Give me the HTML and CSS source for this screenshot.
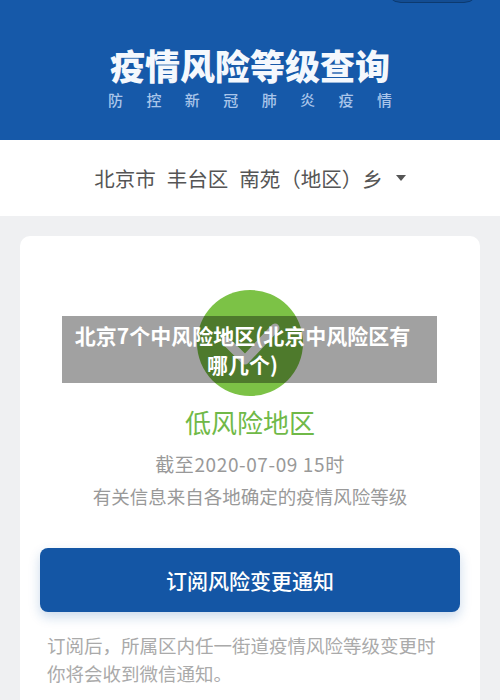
FILE: index.html
```html
<!DOCTYPE html>
<html lang="zh-CN">
<head>
    <meta charset="UTF-8">
    <meta name="viewport" content="width=device-width, initial-scale=1.0">
    <title>疫情风险等级查询</title>
  <link rel="stylesheet" href="styles.css">
</head>
<body>

    <div class="header">
        <div class="capsule"></div>
        <div class="title">疫情风险等级查询</div>
        <div class="subtitle">
            <span>防</span><span>控</span><span>新</span><span>冠</span>
            <span>肺</span><span>炎</span><span>疫</span><span>情</span>
        </div>
    </div>

    <div class="location">
        <span class="place">北京市</span>
        <span class="place">丰台区</span>
        <span class="place">南苑（地区）乡</span>
        <span class="arrow"></span>
    </div>

    <div class="page">
        <div class="card">
            <div class="badge">
                <svg width="106" height="106" viewBox="0 0 106 106">
                    <circle cx="53" cy="53" r="53" fill="#7cc246"/>
                    <polyline points="29,51 48,70 78,38" fill="none" stroke="#fff" stroke-width="9" stroke-linecap="round" stroke-linejoin="round"/>
                </svg>
            </div>
            <div class="level">低风险地区</div>
            <div class="info date">截至2020-07-09 15时</div>
            <div class="info">有关信息来自各地确定的疫情风险等级</div>

            <div class="subscribe">订阅风险变更通知</div>
            <div class="note">订阅后，所属区内任一街道疫情风险等级变更时<br>你将会收到微信通知。</div>
        </div>
    </div>

    <!-- watermark caption over the badge -->
    <div class="caption">北京7个中风险地区(北京中风险区有<br>哪几个)</div>

</body>
</html>
```

FILE: styles.css
```css
body {
    margin: 0;
    background: #eff0f2;
    font-family: "Noto Sans CJK SC", "Noto Sans", sans-serif;
    height: 700px;
    overflow: hidden;
    position: relative;
}
.header {
    background: #1659a9;
    height: 140px;
    box-sizing: border-box;
    padding-top: 45px;
    position: relative;
    overflow: hidden;
}
.capsule {
    position: absolute;
    top: -30px;
    right: 20px;
    width: 95px;
    height: 33px;
    border-radius: 16px;
    background: #134d93;
    border: 1px solid #0c3a70;
    box-sizing: border-box;
}
.title {
    color: #f4f8fd;
    font-size: 35px;
    font-weight: 900;
    line-height: 40px;
    text-align: center;
}
.subtitle {
    width: 284px;
    margin: 5px auto 0;
    display: flex;
    justify-content: space-between;
    color: #a9c5ea;
    font-size: 15px;
    font-weight: 500;
    line-height: 20px;
}
.location {
    background: #fff;
    height: 76px;
    display: flex;
    align-items: center;
    justify-content: center;
    gap: 11px;
    font-size: 20.5px;
    color: #555;
}
.arrow {
    width: 0;
    height: 0;
    margin-left: 2px;
    border-left: 5px solid transparent;
    border-right: 5px solid transparent;
    border-top: 6px solid #555;
}
.page {
    padding: 20px 20px 0;
}
.card {
    background: #fff;
    border-radius: 10px;
    padding: 54px 20px 40px;
    text-align: center;
}
.badge {
    height: 106px;
}
.level {
    margin-top: 8px;
    color: #70b948;
    font-size: 26px;
    line-height: 36px;
}
.info {
    color: #999;
    font-size: 18.5px;
    line-height: 30px;
    margin-top: 2px;
}
.info.date {
    margin-top: 9px;
    font-size: 19px;
    letter-spacing: 0.6px;
}
.subscribe {
    margin-top: 37px;
    height: 64px;
    line-height: 64px;
    border-radius: 8px;
    background: #1456a5;
    color: #fff;
    font-size: 21px;
    font-weight: 500;
    box-shadow: 0 5px 12px rgba(20, 86, 165, 0.22);
}
.note {
    margin-top: 19px;
    padding: 0 7px;
    text-align: left;
    color: #aaa;
    font-size: 18.5px;
    line-height: 28px;
}
.caption {
    position: absolute;
    left: 62px;
    top: 316px;
    width: 375px;
    height: 67px;
    box-sizing: border-box;
    padding: 5px 14px 0 0;
    background: rgba(0, 0, 0, 0.37);
    color: #fff;
    font-size: 21px;
    font-weight: bold;
    line-height: 29px;
    text-align: center;
}
```
